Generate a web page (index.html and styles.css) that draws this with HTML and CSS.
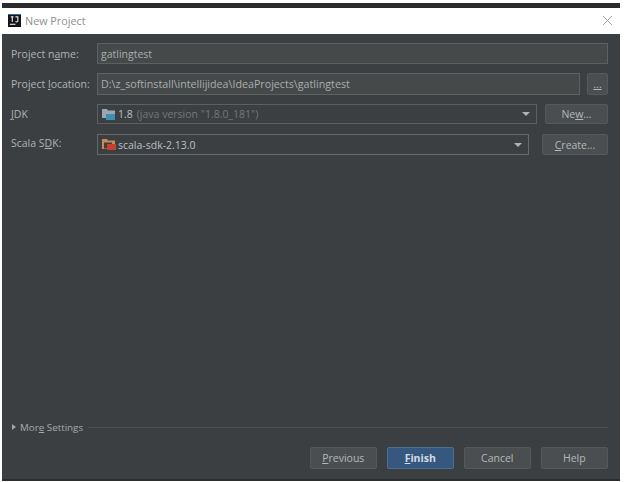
FILE: index.html
```html
<!DOCTYPE html>
<html lang="en">
<head>
<meta charset="utf-8">
<title>New Project</title>
<link rel="stylesheet" href="styles.css">
</head>
<body>
<div class="dialog">
  <header class="titlebar">
    <svg class="app-icon" width="13" height="13" viewBox="0 0 14 14"><rect width="14" height="14" fill="#14151c"/><rect x="2" y="10.5" width="6" height="1.2" fill="#e8e8e8"/><rect x="3" y="2.5" width="3" height="1.2" fill="#e8e8e8"/><rect x="4" y="2.5" width="1.2" height="6" fill="#e8e8e8"/><path d="M8 2.5h3.2v5q0 1.6-1.8 1.6-1.2 0-1.6-.9l.8-.6q.3.4.8.4.6 0 .6-.7V3.7H8z" fill="#e8e8e8"/><rect x="0" y="0" width="14" height="1" fill="#2f6fb0"/></svg>
    <span class="title">New Project</span>
    <svg class="close" width="11" height="11" viewBox="0 0 11 11"><path d="M1 1l9 9M10 1l-9 9" stroke="#a4a4a4" stroke-width="1" fill="none"/></svg>
  </header>
  <main class="content">
    <div class="form">
      <div class="row row-name">
        <label class="label">Project n<u>a</u>me:</label>
        <div class="field grow">gatlingtest</div>
      </div>
      <div class="row row-location">
        <label class="label">Project <u>l</u>ocation:</label>
        <div class="field grow path">D:\z_softinstall\intellijidea\IdeaProjects\gatlingtest</div>
        <button class="btn btn-browse"><u>...</u></button>
      </div>
      <div class="row row-jdk">
        <label class="label"><u>J</u>DK</label>
        <div class="field combo grow">
          <svg class="combo-icon" width="14" height="13" viewBox="0 0 14 13"><path d="M0 1h5l1 1.5h7V10H0z" fill="#9aa7b0"/><rect x="4" y="6" width="9" height="6" fill="#3e8fb8"/></svg>
          <span class="value">1.8</span><span class="muted">(java version "1.8.0_181")</span>
          <span class="arrow"></span>
        </div>
        <button class="btn btn-new">Ne<u>w</u>...</button>
      </div>
      <div class="row row-scala">
        <label class="label">Scala S<u>D</u>K:</label>
        <div class="field combo grow focus">
          <svg class="combo-icon" width="14" height="13" viewBox="0 0 14 13"><path d="M0 1h5l1 1.5h7V11H0z" fill="#c98a5a"/><path d="M2 4.5h8v6H2z" fill="#3c3f41"/><rect x="5" y="6" width="9" height="6" fill="#c8402f"/></svg>
          <span class="value">scala-sdk-2.13.0</span>
          <span class="arrow"></span>
        </div>
        <button class="btn btn-create"><u>C</u>reate...</button>
      </div>
    </div>
    <div class="more">
      <span class="more-arrow"></span>
      <span class="more-text">Mor<u>e</u> Settings</span>
      <span class="more-line"></span>
    </div>
    <footer class="actions">
      <button class="btn action"><u>P</u>revious</button>
      <button class="btn action primary"><u>F</u>inish</button>
      <button class="btn action">Cancel</button>
      <button class="btn action">Help</button>
    </footer>
  </main>
</div>
</body>
</html>
```

FILE: styles.css
```css
* { box-sizing: border-box; }
html, body { margin: 0; height: 100%; background: #fff; }
body {
  padding: 3px 4px 0 2px;
  font-family: "Open Sans", "Liberation Sans", sans-serif;
  font-size: 10.5px;
  color: #b4b8ba;
}
u { text-underline-offset: 1px; }
.dialog {
  height: 478px;
  display: flex;
  flex-direction: column;
  border-top: 5px solid #2b2b2b;
  border-bottom: 2px solid #2b2d2e;
}
.titlebar {
  height: 26px;
  flex: none;
  background: #fff;
  display: flex;
  align-items: center;
  padding: 0 7px 2px 6px;
}
.app-icon { flex: none; }
.title {
  margin-left: 4px;
  font-size: 10.8px;
  color: #8f8f8f;
  flex: 1;
}
.content {
  flex: 1;
  background: #3c3f41;
  padding: 9px 12px 10px 9px;
  display: flex;
  flex-direction: column;
}
.form { flex: 1; display: flex; flex-direction: column; }
.row { display: flex; align-items: center; }
.row-name { height: 21px; }
.row-location { height: 22px; margin-top: 9px; }
.row-jdk { height: 20px; margin-top: 9px; }
.row-scala { height: 21px; margin-top: 10px; }
.row-scala .label { padding-bottom: 3px; }
.label { width: 86px; flex: none; color: #aeb2b4; }
.field {
  height: 100%;
  background: #45494a;
  border: 1px solid #5c6060;
  padding: 0 3px;
  display: flex;
  align-items: center;
  color: #a9adaf;
  min-width: 0;
  white-space: nowrap;
}
.path { font-size: 10.7px; }
.grow { flex: 1; }
.combo { background: #3c3f41; padding-left: 4px; position: relative; }
.focus { border-color: #64696b; }
.combo-icon { flex: none; margin-right: 2px; }
.value { color: #bbbfc1; }
.muted { color: #74787a; margin-left: 4px; }
.arrow {
  margin-left: auto;
  margin-right: 3px;
  width: 0;
  height: 0;
  border-left: 4px solid transparent;
  border-right: 4px solid transparent;
  border-top: 4px solid #aeb2b4;
}
.btn {
  font: inherit;
  color: #b4b8ba;
  background: #4a4e50;
  border: 1px solid #55595b;
  border-radius: 2px;
  padding: 0;
  height: 100%;
  flex: none;
}
.btn-browse { width: 21px; margin-left: 7px; }
.btn-new { width: 63px; margin-left: 8px; }
.btn-create { width: 66px; margin-left: 13px; }
.more {
  display: flex;
  align-items: center;
  height: 14px;
  margin-left: 1px;
  font-size: 9.8px;
}
.more-arrow {
  width: 0;
  height: 0;
  border-top: 3px solid transparent;
  border-bottom: 3px solid transparent;
  border-left: 4px solid #a0a4a6;
}
.more-text { margin-left: 4px; color: #a5a9ab; }
.more-line { flex: 1; height: 1px; background: #4d5153; margin-left: 5px; }
.actions {
  display: flex;
  justify-content: flex-end;
  gap: 9.5px;
  margin-top: 13px;
  height: 22px;
}
.action { width: 67.5px; }
.primary {
  background: #365880;
  border-color: #4c708c;
  color: #d4dbe2;
  font-weight: 700;
}
```
